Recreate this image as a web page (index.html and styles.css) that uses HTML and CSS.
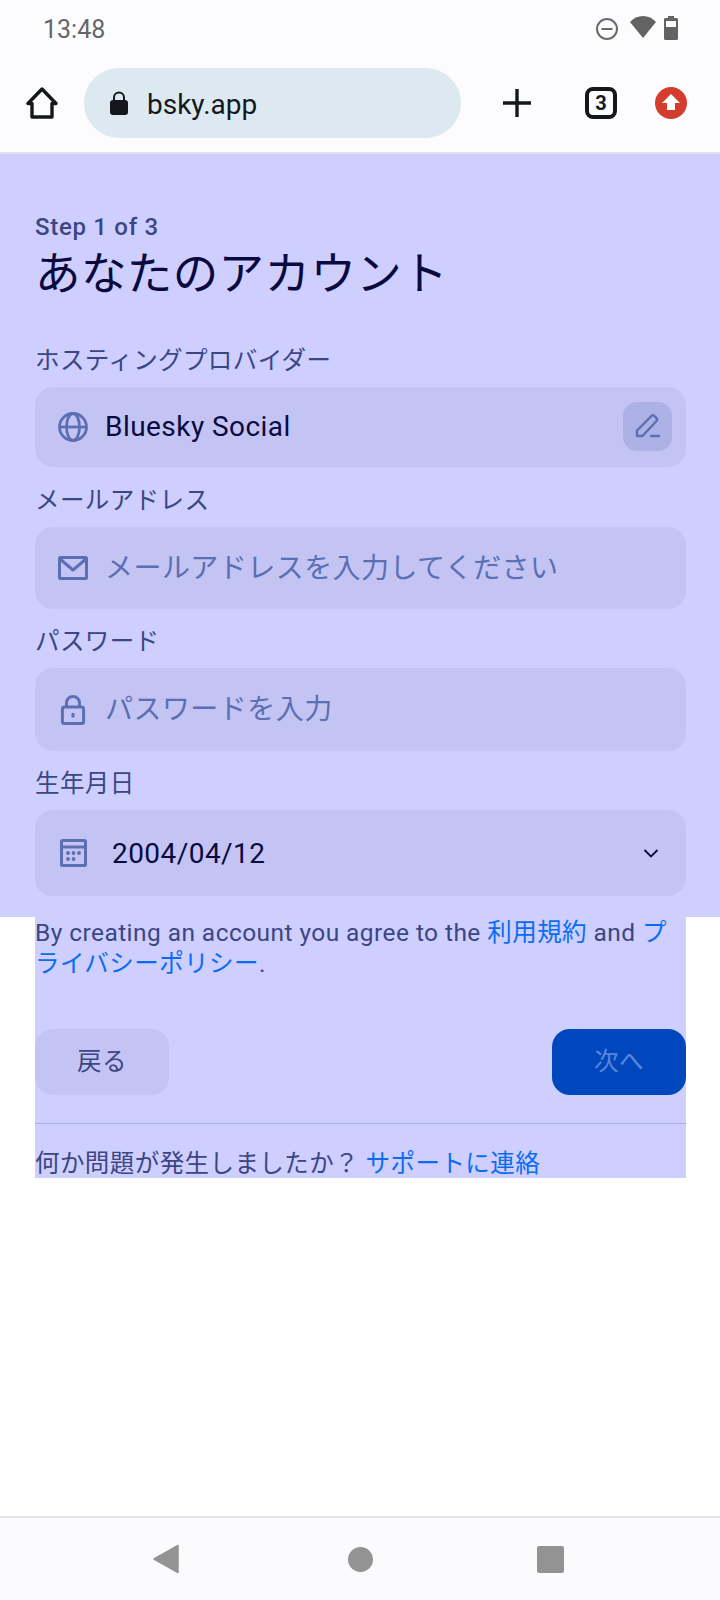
FILE: index.html
```html
<!DOCTYPE html>
<html>
<head>
  <title>Bluesky - Create account</title>
  <link rel="stylesheet" href="styles.css">
</head>
<body>
  <!-- phone status bar -->
  <div class="status">
    <span class="time">13:48</span>
    <svg class="dnd" width="24" height="24" viewBox="0 0 24 24"><circle cx="12" cy="12" r="10" fill="none" stroke="#6b6b6b" stroke-width="2"/><rect x="6.500" y="11" width="11" height="2" fill="#6b6b6b"/></svg>
    <svg class="wifi" width="26" height="22" viewBox="0 0 26 22"><path d="M0 6C3.500 2.200 8 0 13 0s9.500 2.200 13 6L13 22z" fill="#636363"/></svg>
    <svg class="battery" width="14" height="24" viewBox="0 0 14 24"><path d="M4 0h6v2h2.500c.9 0 1.500.6 1.500 1.500V22.500c0 .9-.6 1.500-1.500 1.500h-11C.6 24 0 23.400 0 22.500V3.500C0 2.600.6 2 1.500 2H4z" fill="#636363"/><rect x="2" y="5" width="10" height="6" fill="#fcfcff"/></svg>
  </div>

  <!-- browser toolbar -->
  <div class="toolbar">
    <svg class="home" width="34" height="32" viewBox="0 0 34 32"><path d="M17 2L3 16.500h4V30h20V16.500h4z" fill="none" stroke="#14181c" stroke-width="3.400" stroke-linejoin="round"/></svg>
    <div class="urlbar">
      <svg width="20" height="24" viewBox="0 0 20 24"><path d="M5 10V6.500a5 5 0 0 1 10 0V10" fill="none" stroke="#14181c" stroke-width="2"/><rect x="1" y="9" width="18" height="15" rx="3" fill="#14181c"/></svg>
      <span class="url">bsky.app</span>
    </div>
    <svg class="plus" width="28" height="28" viewBox="0 0 28 28"><path d="M14 0v28M0 14h28" stroke="#14181c" stroke-width="3.400"/></svg>
    <div class="tabs">3</div>
    <svg class="update" width="32" height="32" viewBox="0 0 32 32"><circle cx="16" cy="16" r="16" fill="#d43c2e"/><path d="M16 7l9 9h-5v7h-8v-7H7z" fill="#fff"/></svg>
  </div>

  <div class="page">
    <div class="top">
      <div class="step">Step 1 of 3</div>
      <h1 class="title">あなたのアカウント</h1>

      <div class="group group-host">
        <div class="label">ホスティングプロバイダー</div>
        <div class="field field-host">
          <svg class="icon" width="30" height="30" viewBox="0 0 30 30" fill="none" stroke="#5b6fb2" stroke-width="2.800"><circle cx="15" cy="15" r="13.500"/><ellipse cx="15" cy="15" rx="6.500" ry="13.500"/><path d="M2 15h26"/></svg>
          <span class="value">Bluesky Social</span>
          <div class="edit">
            <svg width="26" height="26" viewBox="0 0 26 26" fill="none" stroke="#5b6fb2" stroke-width="2.400" stroke-linejoin="round" stroke-linecap="round"><path d="M2 23v-5.500L16.500 3a2 2 0 0 1 2.800 0l2.200 2.200a2 2 0 0 1 0 2.800L7.500 23z"/><path d="M16 23h8"/></svg>
          </div>
        </div>
      </div>

      <div class="group group-mail">
        <div class="label">メールアドレス</div>
        <div class="field field-mail">
          <svg class="icon" width="30" height="24" viewBox="0 0 30 24" fill="none" stroke="#5b6fb2" stroke-width="3" stroke-linejoin="round"><rect x="1.500" y="1.500" width="27" height="21" rx="1"/><path d="M2 3l13 11L28 3"/></svg>
          <span class="placeholder">メールアドレスを入力してください</span>
        </div>
      </div>

      <div class="group">
        <div class="label">パスワード</div>
        <div class="field field-pass">
          <svg class="icon" width="30" height="30" viewBox="0 0 30 30" fill="none" stroke="#5b6fb2" stroke-width="3" stroke-linejoin="round"><rect x="4.400" y="12" width="21.200" height="16.500" rx="2"/><path d="M8.500 12V8a6.500 6.500 0 0 1 13 0v4"/><path d="M15 18v4.500"/></svg>
          <span class="placeholder">パスワードを入力</span>
        </div>
      </div>

      <div class="group">
        <div class="label">生年月日</div>
        <div class="field field-date">
          <svg class="icon" width="30" height="28" viewBox="0 0 30 28" fill="none" stroke="#5b6fb2" stroke-width="3"><rect x="3.500" y="1.500" width="24" height="25" rx="1"/><path d="M3.500 8h24"/><g fill="#5b6fb2" stroke="none"><circle cx="10" cy="14" r="1.900"/><circle cx="15.500" cy="14" r="1.900"/><circle cx="21" cy="14" r="1.900"/><circle cx="10" cy="20" r="1.900"/><circle cx="15.500" cy="20" r="1.900"/></g></svg>
          <span class="value date">2004/04/12</span>
          <svg class="chevron" width="16" height="9" viewBox="0 0 16 9" fill="none" stroke="#0a0a40" stroke-width="1.800"><path d="M1.500 1l6.500 6.500L14.500 1"/></svg>
        </div>
      </div>
    </div>

    <div class="bottom">
      <p class="terms">By creating an account you agree to the <a href="#">利用規約</a> and <a href="#">プライバシーポリシー</a>.</p>
      <div class="buttons">
        <button class="btn btn-back">戻る</button>
        <button class="btn btn-next">次へ</button>
      </div>
      <div class="help">何か問題が発生しましたか？ <a href="#">サポートに連絡</a></div>
    </div>
  </div>

  <!-- android nav bar -->
  <div class="navbar">
    <svg width="26" height="30" viewBox="0 0 26 30"><path d="M25 1.500v27L1 15z" fill="#939393" stroke="#939393" stroke-width="1.500" stroke-linejoin="round"/></svg>
    <div class="nav-circle"></div>
    <div class="nav-square"></div>
  </div>
</body>
</html>
```

FILE: styles.css
```css
* { box-sizing: border-box; }
body {
  margin: 0;
  width: 720px;
  height: 1600px;
  display: flex;
  flex-direction: column;
  background-color: #fff;
  font-family: Roboto, "Noto Sans CJK JP", sans-serif;
}
a { color: #0a6cf5; text-decoration: none; }

.status {
  height: 60px;
  display: flex;
  align-items: center;
  padding: 0 42px 2px 43px;
  background-color: #fcfcff;
}
.time { font-size: 25px; color: #666; margin-right: auto; }
.wifi { margin-left: 11px; margin-bottom: 5px; }
.battery { margin-left: 8px; margin-bottom: 2px; }

.toolbar {
  height: 94px;
  display: flex;
  align-items: center;
  padding: 0 0 6px 25px;
  background-color: #fcfcff;
  border-bottom: 2px solid #dfe3ea;
}
.urlbar {
  width: 377px;
  height: 70px;
  margin-left: 25px;
  padding-left: 25px;
  display: flex;
  align-items: center;
  gap: 18px;
  border-radius: 35px;
  background-color: #dde9f1;
  font-size: 28px;
  color: #14181c;
}
.url { margin-top: 2px; }
.plus { margin-left: 42px; }
.tabs {
  width: 32px;
  height: 32px;
  margin-left: 54px;
  border: 4px solid #14181c;
  border-radius: 8px;
  font-size: 20px;
  font-weight: 700;
  line-height: 24px;
  text-align: center;
  color: #14181c;
}
.update { margin-left: 38px; }

.page { flex: 1; }
.top {
  padding: 58px 34px 21px 35px;
  background-color: #cfcfff;
}
.step { font-size: 24px; font-weight: 500; line-height: 30px; color: #3b4685; letter-spacing: 0.7px; }
.title {
  margin: 3px 0 0;
  font-size: 45.500px;
  font-weight: 400;
  line-height: 59px;
  color: #0a0a40;
  letter-spacing: 0.4px;
}
.group { margin-top: 18px; }
.group-host { margin-top: 42px; }
.group-mail { margin-top: 19px; }
.label {
  margin-bottom: 11px;
  font-size: 24.500px;
  line-height: 30px;
  color: #3b4685;
  letter-spacing: 0.4px;
}

.field {
  display: flex;
  align-items: center;
  padding-left: 23px;
  border-radius: 18px;
  background-color: #c4c4f4;
}
.field-host { height: 80px; padding-right: 14px; }
.field-mail { height: 82px; }
.field-pass { height: 83px; }
.field-date { height: 86px; padding-right: 27px; }
.icon { flex-shrink: 0; }
.value { margin: 0 0 2px 17px; font-size: 28px; color: #0a0a40; letter-spacing: 0.45px; }
.value.date { margin: 0 0 0 24px; }
.placeholder { margin: 0 0 5px 17px; font-size: 28px; color: #5b6fb2; letter-spacing: 0.45px; }
.edit {
  width: 49px;
  height: 49px;
  margin: 0 0 2px auto;
  display: flex;
  align-items: center;
  justify-content: center;
  border-radius: 14px;
  background-color: #acb2e6;
}
.chevron { margin-left: auto; }

.bottom {
  width: 651px;
  height: 261px;
  margin-left: 35px;
  background-color: #cfcfff;
}
.terms {
  margin: 0;
  font-size: 24.500px;
  line-height: 31px;
  color: #3b4685;
  letter-spacing: 0.43px;
}
.buttons {
  margin-top: 50px;
  display: flex;
  justify-content: space-between;
}
.btn {
  width: 134px;
  height: 66px;
  padding: 0 0 5px;
  border: 0;
  border-radius: 18px;
  font-family: inherit;
  font-size: 24.500px;
  letter-spacing: 0.4px;
}
.btn-back { background-color: #c4c4f4; color: #3b4685; }
.btn-next { background-color: #0047be; color: #5b85dc; }
.help {
  margin-top: 28px;
  padding-top: 25px;
  border-top: 1px solid #acb2e0;
  font-size: 24.500px;
  line-height: 30px;
  color: #3b4685;
  letter-spacing: 0.43px;
}

.navbar {
  height: 84px;
  display: flex;
  align-items: center;
  padding: 0 156px 0 153px;
  justify-content: space-between;
  background-color: #fbfbfe;
  border-top: 2px solid #dfe3ea;
}
.nav-circle { width: 25px; height: 25px; margin-left: 4px; border-radius: 50%; background-color: #939393; }
.nav-square { width: 27px; height: 27px; border-radius: 2px; background-color: #939393; }
```
